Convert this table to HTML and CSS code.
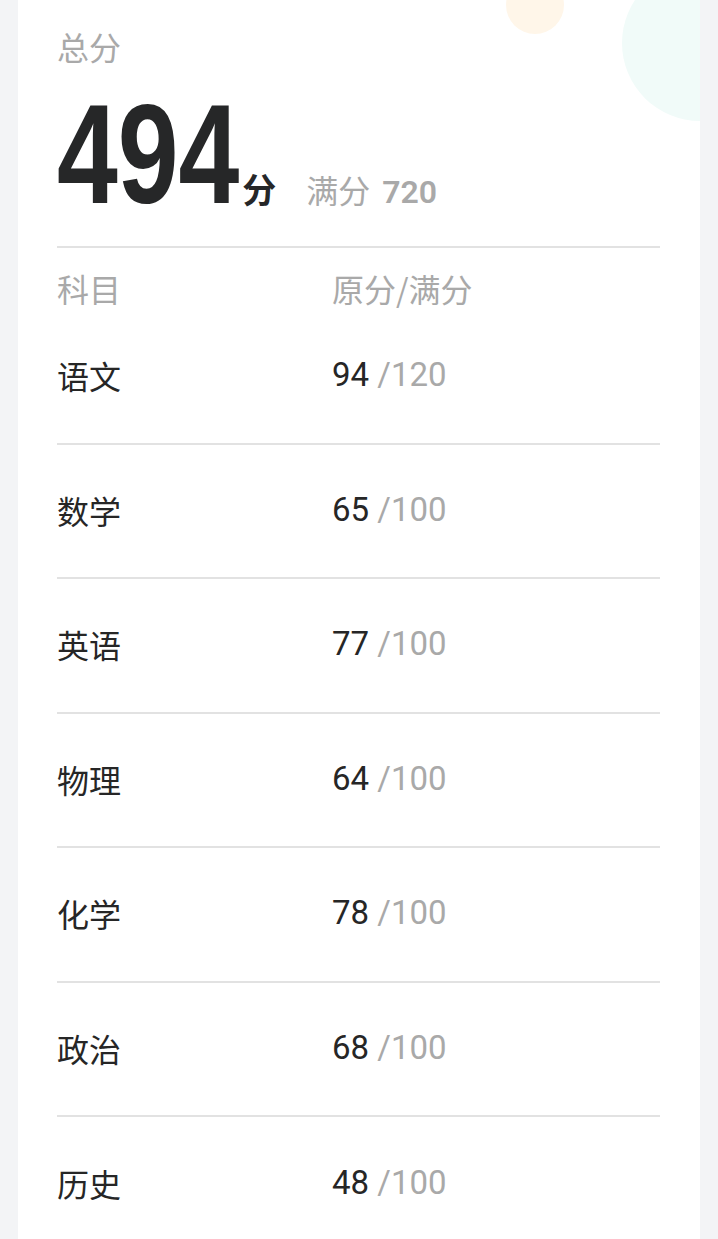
FILE: index.html
```html
<!DOCTYPE html>
<html lang="zh-CN">
<head>
<meta charset="utf-8">
<title>成绩</title>
<link rel="stylesheet" href="styles.css">
</head>
<body>
<main class="card">
  <span class="deco deco-orange"></span>
  <span class="deco deco-teal"></span>
  <section class="summary">
    <div class="label">总分</div>
    <div class="total">
      <span class="total-num">494</span>
      <span class="total-unit">分</span>
      <span class="total-full">满分 <b>720</b></span>
    </div>
  </section>
  <section class="table">
    <div class="row head">
      <span>科目</span>
      <span>原分/满分</span>
    </div>
    <div class="row"><span class="subj">语文</span><span class="score">94<span class="max"> /120</span></span></div>
    <div class="row"><span class="subj">数学</span><span class="score">65<span class="max"> /100</span></span></div>
    <div class="row"><span class="subj">英语</span><span class="score">77<span class="max"> /100</span></span></div>
    <div class="row"><span class="subj">物理</span><span class="score">64<span class="max"> /100</span></span></div>
    <div class="row"><span class="subj">化学</span><span class="score">78<span class="max"> /100</span></span></div>
    <div class="row"><span class="subj">政治</span><span class="score">68<span class="max"> /100</span></span></div>
    <div class="row"><span class="subj">历史</span><span class="score">48<span class="max"> /100</span></span></div>
  </section>
</main>
</body>
</html>
```
FILE: styles.css
```css
html, body {
  margin: 0;
  padding: 0;
}
body {
  background: #f3f4f6;
  font-family: Roboto, "Noto Sans CJK SC", sans-serif;
  color: #262626;
}
.card {
  position: relative;
  overflow: hidden;
  margin: 0 18px;
  background: #ffffff;
  padding: 24px 40px 40px 39px;
  min-height: 1239px;
  box-sizing: border-box;
}
.deco {
  position: absolute;
  border-radius: 50%;
}
.deco-orange {
  left: 488px;
  top: -24px;
  width: 58px;
  height: 58px;
  background: #fff6e9;
}
.deco-teal {
  left: 604px;
  top: -35px;
  width: 156px;
  height: 156px;
  background: #f1fbf9;
}
.summary {
  position: relative;
}
.label {
  font-family: "Noto Sans CJK SC", sans-serif;
  font-size: 32px;
  line-height: 44px;
  color: #a9a9a9;
}
.total {
  display: flex;
  align-items: baseline;
  height: 141px;
  margin-top: 16px;
}
.total-num {
  display: inline-block;
  font-family: "Liberation Sans", Arial, sans-serif;
  font-weight: 700;
  font-size: 141px;
  line-height: 141px;
  color: #262728;
  transform: scaleX(0.775);
  transform-origin: 0 50%;
  margin-right: -53px;
}
.total-unit {
  font-family: "Noto Sans CJK SC", sans-serif;
  font-weight: 700;
  font-size: 34px;
  color: #262728;
  margin-left: 3px;
}
.total-full {
  font-family: Roboto, "Noto Sans CJK SC", sans-serif;
  font-size: 32px;
  color: #a9a9a9;
  margin-left: 30px;
  word-spacing: 4px;
}
.total-full b {
  font-weight: 600;
}
.table {
  margin-top: 21px;
  border-top: 2px solid #e2e2e2;
}
.row {
  display: grid;
  grid-template-columns: 275px 1fr;
  align-items: center;
  height: 134.5px;
  box-sizing: border-box;
  padding: 43px 0 45.5px;
  border-bottom: 2px solid #e2e2e2;
  font-size: 32px;
  line-height: 44px;
}
.row:last-child {
  border-bottom: none;
}
.row.head {
  height: auto;
  padding: 20px 0 2px;
  border-bottom: none;
  color: #a9a9a9;
  font-family: "Noto Sans CJK SC", sans-serif;
  line-height: 40px;
}
.subj {
  font-family: "Noto Sans CJK SC", sans-serif;
  color: #262626;
}
.score {
  font-family: Roboto, sans-serif;
  font-size: 33px;
  color: #262626;
}
.max {
  color: #a9a9a9;
}
```
